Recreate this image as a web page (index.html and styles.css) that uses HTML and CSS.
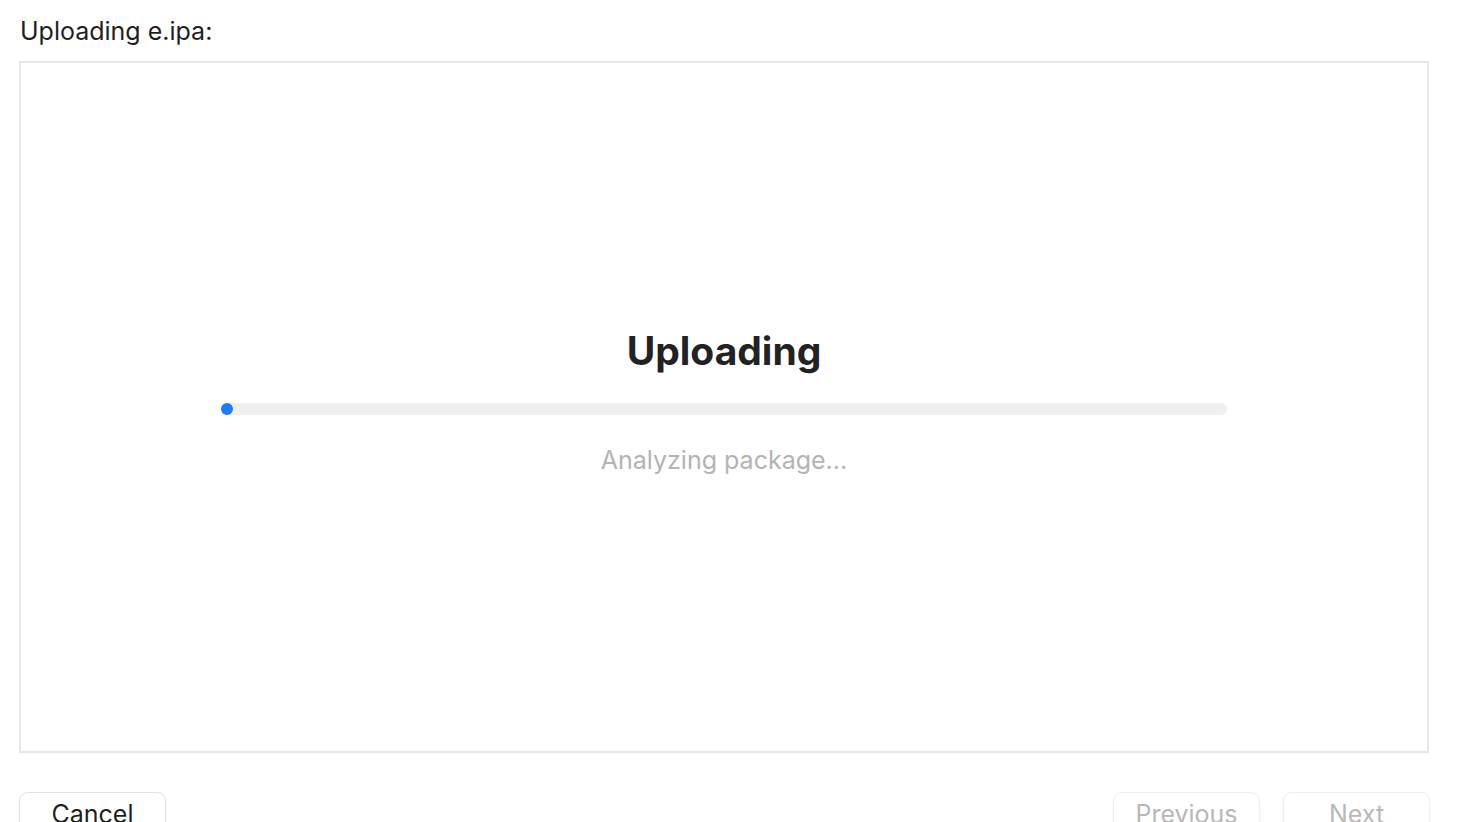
FILE: index.html
```html
<!DOCTYPE html>
<html>
<head>
<meta charset="UTF-8">
<title>Uploading e.ipa</title>
<link rel="stylesheet" href="styles.css">
</head>
<body>

<div class="sheet">
	<p class="title">Uploading e.ipa:</p>

	<div class="panel">
		<h1 class="heading">Uploading</h1>
		<div class="track"><span class="dot"></span></div>
		<p class="status">Analyzing package...</p>
	</div>

	<div class="buttons">
		<button class="btn">Cancel</button>
		<div class="nav">
			<button class="btn disabled">Previous</button>
			<button class="btn disabled">Next</button>
		</div>
	</div>
</div>

</body>
</html>
```

FILE: styles.css
```css
* {font-family: Inter, "Noto Sans", sans-serif; box-sizing: border-box}

html, body {
	margin: 0;
	background: #fff;
	overflow: hidden;
}

.sheet {
	width: 1458px;
	height: 822px;
	padding: 14px 29px 0 19px;
	display: flex;
	flex-direction: column;
}

p.title {
	margin: 0 0 13px 1px;
	font-size: 25px;
	line-height: 34px;
	color: #1f1f1f;
	flex-shrink: 0;
}

.panel {
	height: 692px;
	flex-shrink: 0;
	border: 2px solid #e6e6e6;
	display: flex;
	flex-direction: column;
	align-items: center;
	justify-content: center;
	padding-bottom: 10px;
}

h1.heading {
	margin: 0 0 28px;
	font-size: 39px;
	line-height: 48px;
	font-weight: 700;
	color: #222;
}

.track {
	width: 1006px;
	height: 12px;
	border-radius: 6px;
	background: #efefef;
	display: flex;
	align-items: center;
}

.dot {
	width: 12px;
	height: 12px;
	border-radius: 50%;
	background: #1b7ef6;
}

p.status {
	margin: 28px 0 0;
	font-size: 25px;
	line-height: 34px;
	color: #b3b3b3;
}

.buttons {
	margin-top: 39px;
	display: flex;
	justify-content: space-between;
	flex-shrink: 0;
}

.nav {
	display: flex;
	gap: 23px;
	margin-right: -1px;
}

.btn {
	width: 147px;
	height: 44px;
	padding: 0;
	border: 1px solid #e2e2e2;
	border-radius: 9px;
	background: #fff;
	box-shadow: 0 1px 2px rgba(0, 0, 0, 0.08);
	font-size: 25px;
	color: #1f1f1f;
	line-height: 34px;
	text-align: center;
}

.btn.disabled {
	color: #b8b8b8;
	border-color: #efefef;
}
```
